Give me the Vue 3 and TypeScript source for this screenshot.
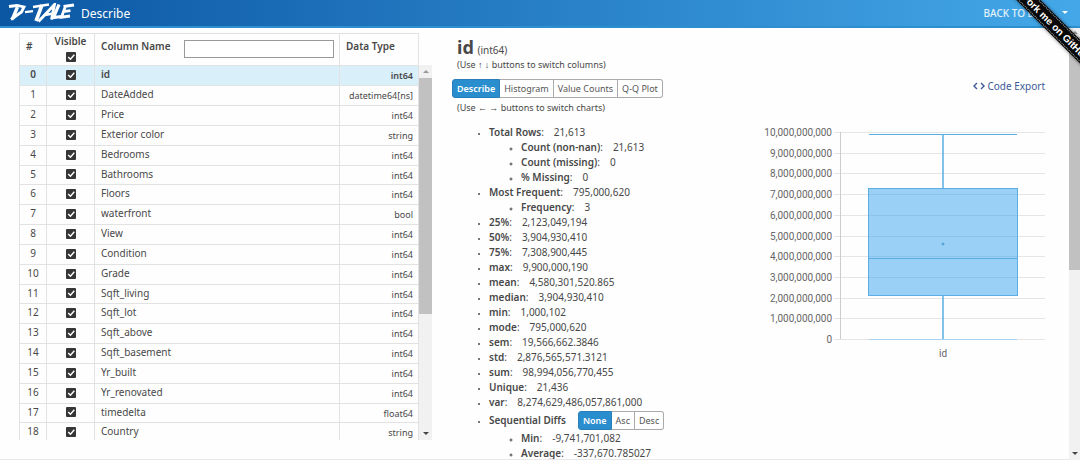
<script setup lang="ts">
import { ref } from 'vue'

interface Column { name: string; dtype: string; visible: boolean }
interface Stat { label: string; value: string; children?: Stat[] }

const columns = ref<Column[]>([
  ['id', 'int64'], ['DateAdded', 'datetime64[ns]'], ['Price', 'int64'], ['Exterior color', 'string'],
  ['Bedrooms', 'int64'], ['Bathrooms', 'int64'], ['Floors', 'int64'], ['waterfront', 'bool'],
  ['View', 'int64'], ['Condition', 'int64'], ['Grade', 'int64'], ['Sqft_living', 'int64'],
  ['Sqft_lot', 'int64'], ['Sqft_above', 'int64'], ['Sqft_basement', 'int64'], ['Yr_built', 'int64'],
  ['Yr_renovated', 'int64'], ['timedelta', 'float64'], ['Country', 'string'],
].map(([name, dtype]) => ({ name, dtype, visible: true })))

const allVisible = ref(true)
const filter = ref('')
const selected = ref(0)
const charts = ['Describe', 'Histogram', 'Value Counts', 'Q-Q Plot']
const chart = ref('Describe')
const sorts = ['None', 'Asc', 'Desc']
const sort = ref('None')

const stats: Stat[] = [
  { label: 'Total Rows', value: '21,613', children: [
    { label: 'Count (non-nan)', value: '21,613' },
    { label: 'Count (missing)', value: '0' },
    { label: '% Missing', value: '0' },
  ] },
  { label: 'Most Frequent', value: '795,000,620', children: [{ label: 'Frequency', value: '3' }] },
  { label: '25%', value: '2,123,049,194' },
  { label: '50%', value: '3,904,930,410' },
  { label: '75%', value: '7,308,900,445' },
  { label: 'max', value: '9,900,000,190' },
  { label: 'mean', value: '4,580,301,520.865' },
  { label: 'median', value: '3,904,930,410' },
  { label: 'min', value: '1,000,102' },
  { label: 'mode', value: '795,000,620' },
  { label: 'sem', value: '19,566,662.3846' },
  { label: 'std', value: '2,876,565,571.3121' },
  { label: 'sum', value: '98,994,056,770,455' },
  { label: 'Unique', value: '21,436' },
  { label: 'var', value: '8,274,629,486,057,861,000' },
]
const diffs: Stat[] = [
  { label: 'Min', value: '-9,741,701,082' },
  { label: 'Average', value: '-337,670.785027' },
]

const plotTop = 7
const plotHeight = 207
const yOf = (billions: number) => Math.round(plotTop + plotHeight * (1 - billions / 10))
const ticks = Array.from({ length: 11 }, (_, i) => ({
  y: yOf(i),
  text: (i * 1e9).toLocaleString('en-US'),
}))
</script>

<template>
  <div class="page">
    <header class="bar">
      <svg class="logo" viewBox="0 0 68 20" role="img" aria-label="D-Tale">
        <g fill="none" stroke="#fff" stroke-width="2.8">
          <path d="M1 3.5 L9 2.5 L16 4 L13.5 9 L3 16.5" />
          <path d="M9.5 4 L4.5 16" stroke-width="3.4" />
          <path d="M17 9.2 L25 8.2" stroke-width="2.2" />
          <path d="M25 4 L41 1.5" stroke-width="2.4" />
          <path d="M34 2 L28 18" stroke-width="3.6" />
          <path d="M30.5 18.5 L46.5 1.5 L43.5 16.5" />
          <path d="M37 12 L45 10.5" stroke-width="2.4" />
          <path d="M51 1.5 L45.5 14.5 L53.5 13.5" stroke-width="3.2" />
          <path d="M66 2 L55.5 3.5 M57.5 3 L53.5 14.2 L62 13 M55 8.6 L62.5 7.6" />
        </g>
      </svg>
      <span class="title">Describe</span>
      <a class="back" href="#">BACK TO DATA<span class="caret"></span></a>
    </header>
    <a class="ribbon" href="#"><span>Fork me on GitHub</span></a>

    <div class="body">
      <main class="content">
        <section class="columns">
          <table>
            <thead>
              <tr>
                <th class="num">#</th>
                <th class="vis"><label for="all">Visible</label><input id="all" v-model="allVisible" type="checkbox"></th>
                <th class="name"><div><label for="filter">Column Name</label><input id="filter" v-model="filter" type="text"></div></th>
                <th class="type">Data Type</th>
              </tr>
            </thead>
            <tbody>
              <tr v-for="(c, i) in columns" :key="c.name" :class="{ active: i === selected }" @click="selected = i">
                <td class="num">{{ i }}</td>
                <td class="vis"><input v-model="c.visible" type="checkbox" :aria-label="c.name"></td>
                <td class="name">{{ c.name }}</td>
                <td class="type">{{ c.dtype }}</td>
              </tr>
            </tbody>
          </table>
          <div class="scroll list-scroll"><i class="up"></i><b></b><i class="down"></i></div>
        </section>

        <section class="details">
          <h1>id <small>(int64)</small></h1>
          <p class="hint">(Use ↑ ↓ buttons to switch columns)</p>
          <div class="tools">
            <div class="group">
              <button v-for="c in charts" :key="c" type="button" :class="{ on: c === chart }" @click="chart = c">{{ c }}</button>
            </div>
            <a class="export" href="#">
              <svg viewBox="0 0 12 8"><path d="M4 1 L1 4 L4 7 M8 1 L11 4 L8 7" fill="none" stroke="currentColor" stroke-width="1.4" /></svg>
              Code Export
            </a>
          </div>
          <p class="hint second">(Use ← → buttons to switch charts)</p>
          <div class="result">
            <ul class="stats">
              <li v-for="s in stats" :key="s.label">
                <strong>{{ s.label }}</strong>:<span>{{ s.value }}</span>
                <ul v-if="s.children">
                  <li v-for="k in s.children" :key="k.label"><strong>{{ k.label }}</strong>:<span>{{ k.value }}</span></li>
                </ul>
              </li>
              <li>
                <div class="seq">
                  <strong>Sequential Diffs</strong>
                  <div class="group">
                    <button v-for="s in sorts" :key="s" type="button" :class="{ on: s === sort }" @click="sort = s">{{ s }}</button>
                  </div>
                </div>
                <ul>
                  <li v-for="k in diffs" :key="k.label"><strong>{{ k.label }}</strong>:<span>{{ k.value }}</span></li>
                </ul>
              </li>
            </ul>
            <svg class="plot" viewBox="0 0 290 245" role="img" aria-label="Box plot of id">
              <g v-for="t in ticks" :key="t.y">
                <path :d="`M79 ${t.y + 0.5}H290`" stroke="#e5e5e5" />
                <text x="77" :y="t.y + 4" text-anchor="end">{{ t.text }}</text>
              </g>
              <path :d="`M85.5 ${yOf(10)}V${yOf(0)}`" stroke="#ccc" />
              <rect x="113.5" :y="yOf(7.309) + 0.5" width="149" :height="yOf(2.123) - yOf(7.309)" fill="#36a2eb" fill-opacity="0.5" stroke="#5aaee4" />
              <g stroke="#5aaee4" fill="none">
                <path :d="`M113 ${yOf(3.905) + 0.5}H263 M114 ${yOf(9.9) + 0.5}H262`" />
                <path :d="`M114 ${yOf(0) + 0.5}H262`" stroke="#a5d3f2" />
                <path :d="`M188 ${yOf(9.9)}V${yOf(7.309)} M188 ${yOf(2.123)}V${yOf(0)}`" stroke-width="1.5" />
              </g>
              <circle cx="188" :cy="yOf(4.58)" r="1.5" fill="#5aa5d6" />
              <text x="188" :y="yOf(0) + 18" text-anchor="middle">id</text>
            </svg>
          </div>
        </section>
      </main>
      <div class="scroll page-scroll"><i class="up"></i><b></b><i class="down"></i></div>
    </div>
  </div>
</template>

<style>
body { margin: 0; overflow: hidden; }
</style>

<style scoped>
* { box-sizing: border-box; }
.page { position: relative; height: 100vh; display: flex; flex-direction: column; overflow: hidden; background: #fefefe; color: #484848; font: 10px/15px "Noto Sans", sans-serif; }
.bar { flex: none; height: 28px; padding: 0 12px 0 8px; display: flex; align-items: center; color: #fff; background: linear-gradient(90deg, #0b56a3, #44a8e8); border-bottom: 2px solid #2d8fcf; }
.logo { width: 68px; height: 20px; }
.title { margin-left: 5px; font-size: 12px; }
.back { margin-left: auto; color: #e3f1fb; text-decoration: none; font-weight: 500; }
.caret { display: inline-block; margin-left: 10px; vertical-align: 3px; border: 3px solid transparent; border-top-color: #fff; border-bottom: 0; }
.ribbon { position: absolute; z-index: 2; top: 19px; right: -76px; width: 200px; height: 17px; display: flex; align-items: center; justify-content: center; transform: rotate(45deg); background: #080808; box-shadow: 0 0 4px #0008; color: #fff; text-decoration: none; font: bold 10px/13px "Liberation Sans", sans-serif; }
.ribbon span { flex: 1; text-align: center; border: 1px dotted #aaa; border-width: 1px 0; }
.body { flex: 1; min-height: 0; display: flex; }
.content { flex: 1; min-width: 0; display: grid; grid-template-columns: 413fr 593fr; gap: 20px; padding: 5px 24px 0 19px; overflow: hidden; border-bottom: 1px solid #e8e8e8; }
.columns { height: calc(100vh - 53px); min-width: 0; display: flex; overflow: hidden; }
table { flex: 1; width: 100%; border-collapse: collapse; table-layout: fixed; align-self: flex-start; }
th, td { border: 1px solid #e2e2e2; padding: 0 5px 0 6px; text-align: left; }
thead tr { height: 32px; }
th { font-weight: 600; padding-bottom: 6px; }
tbody tr { height: 20px; line-height: 15px; }
tbody tr:nth-child(6n) { height: 19px; }
td { padding-bottom: 2px; }
.num { width: 27px; text-align: center; padding-left: 0; padding-right: 0; }
th.num { text-align: left; padding-left: 6px; }
.vis { width: 48px; text-align: center; padding: 0; }
td.vis { padding-bottom: 2px; }
th.vis { vertical-align: top; }
th.vis label { display: block; }
th.name { padding-bottom: 2px; }
th.name div { display: flex; align-items: center; gap: 13px; }
th.name label { padding-bottom: 4px; }
th.name input { flex: 1; min-width: 0; height: 18px; border: 1px solid #999; background: #fff; }
.type { width: 79px; }
td.type { text-align: right; font-size: 9px; padding-bottom: 0; }
.active { background: #d9effa; }
.active .type, .active .num, .active .name { font-weight: 600; }
input[type=checkbox] { appearance: none; display: block; width: 10px; height: 10px; margin: 0 auto; border-radius: 1px; background: #363636; }
th.vis input[type=checkbox] { margin: 3px auto; }
input[type=checkbox]:checked { background: #363636 url("data:image/svg+xml,%3Csvg xmlns='http://www.w3.org/2000/svg' viewBox='0 0 9 9'%3E%3Cpath d='M2 4.5L4 6.5L7.5 2.5' fill='none' stroke='white' stroke-width='1.3'/%3E%3C/svg%3E"); }
.scroll { display: flex; flex-direction: column; align-items: center; background: #f1f1f1; flex: none; }
.scroll i { border: 3px solid transparent; margin: 5px 0; }
.scroll .up { border-bottom-color: #999; border-top: 0; }
.scroll .down { border-top-color: #444; border-bottom: 0; margin-top: auto; }
.scroll b { width: 100%; background: #c1c1c1; }
.list-scroll { width: 13px; margin-top: 32px; }
.list-scroll b { height: 63%; }
.page-scroll { width: 11px; }
.page-scroll .up { margin: 3px 0; }
.page-scroll b { height: 54%; }
.details { min-width: 0; }
h1 { margin: 5px 0 0 5px; font-size: 18px; line-height: 18px; }
h1 small { font-size: 10px; font-weight: 400; line-height: 10px; margin-left: -1px; }
.hint { margin: 2px 0 0 5px; font-size: 9px; line-height: 13px; }
.second { margin-top: 3px; }
.tools { display: flex; justify-content: space-between; margin-top: 8px; }
.group { display: flex; }
button { height: 19px; padding: 0 4px; border: 1px solid #aaa; border-left-width: 0; background: #fff; color: #555; font: inherit; font-size: 9px; line-height: 15px; }
button:first-child { border-left-width: 1px; border-radius: 3px 0 0 3px; }
button:last-child { border-radius: 0 3px 3px 0; }
button.on { background: #2a8dcd; border-color: #2a7fb8; color: #fff; font-weight: 600; }
.export { color: #3b5998; text-decoration: none; }
.export svg { width: 12px; height: 8px; }
.result { display: flex; justify-content: space-between; margin-top: 11px; }
ul { margin: 0; padding-left: 32px; }
.stats { padding-left: 37px; }
strong { font-weight: 600; }
li::marker { font-size: 7px; }
li span { margin-left: 10px; }
.seq { display: flex; align-items: center; gap: 12px; padding: 1px 0; }
.plot { flex: none; width: 290px; height: 245px; }
.plot text { font: 10px Roboto, sans-serif; fill: #666; }
</style>
